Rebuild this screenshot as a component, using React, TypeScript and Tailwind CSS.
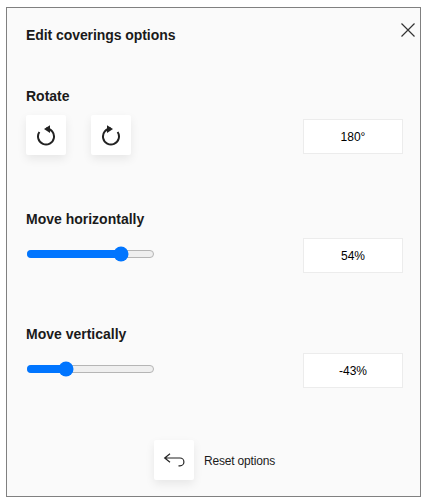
const font = "[font-family:'Liberation_Sans',Arial,sans-serif]";

function Slider({ value }: { value: number }) {
  return (
    <div className="relative ml-px mt-[7px] h-2 w-[127px] rounded-full border border-[#b5b5b5] bg-[#efefef]">
      <div className="absolute -left-px -top-px h-2 rounded-full bg-[#0075ff]" style={{ width: value }} />
      <div
        className="absolute top-1/2 h-[15px] w-[15px] -translate-x-1/2 -translate-y-1/2 rounded-full bg-[#0075ff]"
        style={{ left: value - 1 }}
      />
    </div>
  );
}

function ValueBox({ text }: { text: string }) {
  return (
    <div className="flex h-[35px] w-[100px] items-center justify-center border border-[#ececec] bg-white text-xs text-black">
      {text}
    </div>
  );
}

function IconButton({ children }: { children: React.ReactNode }) {
  return (
    <button className="flex h-10 w-10 items-center justify-center rounded-[2px] bg-white shadow-[0_4px_10px_rgba(0,0,0,0.08)]">
      {children}
    </button>
  );
}

function RotateIcon({ flip }: { flip?: boolean }) {
  return (
    <svg width="20" height="22" viewBox="0 0 20 22" fill="none" className={flip ? "-scale-x-100" : ""}>
      <path d="M3.4 8 A8 8 0 1 0 10 4.5" stroke="#222" strokeWidth="2" />
      <path d="M8 5 L14 1.2 L14 9 Z" fill="#222" />
    </svg>
  );
}

export default function App() {
  return (
    <div className={`h-[500px] w-[424px] bg-white pl-[6px] pt-[7px] ${font}`}>
      <div className="relative h-[490px] w-[415px] border border-[#808080] bg-[#fafafa] pl-[19px] pr-[17px] pt-[19px] text-[#1a1a1a]">
        <button className="absolute right-[4px] top-[14px]">
          <svg width="16" height="16" viewBox="0 0 16 16" fill="none">
            <path d="M1.5 1.5 L14.5 14.5 M14.5 1.5 L1.5 14.5" stroke="#333" strokeWidth="1.2" />
          </svg>
        </button>
        <h1 className="h-4 text-sm font-bold leading-4 tracking-[-0.07px]">Edit coverings options</h1>

        <h2 className="mt-[45px] h-4 text-sm font-bold leading-4">Rotate</h2>
        <div className="flex items-start justify-between">
          <div className="mt-[11px] flex gap-[25px]">
            <IconButton><RotateIcon /></IconButton>
            <IconButton><RotateIcon flip /></IconButton>
          </div>
          <div className="mt-[15px]"><ValueBox text="180°" /></div>
        </div>

        <h2 className="mt-[56px] h-4 text-sm font-bold leading-4">Move horizontally</h2>
        <div className="flex items-start justify-between">
          <div className="mt-[16px]"><Slider value={94} /></div>
          <div className="mt-[11px]"><ValueBox text="54%" /></div>
        </div>

        <h2 className="mt-[53px] h-4 text-sm font-bold leading-4">Move vertically</h2>
        <div className="flex items-start justify-between">
          <div className="mt-[16px]"><Slider value={39} /></div>
          <div className="mt-[11px]"><ValueBox text="-43%" /></div>
        </div>

        <div className="mt-[52px] flex items-center justify-start gap-[10px] pl-[128px]">
          <IconButton>
            <svg width="22" height="14" viewBox="0 0 22 14" fill="none">
              <path d="M7 0.8 L1.7 5 L7 9.2 M1.7 5 H17 A3.9 3.9 0 0 1 17 12.8 H15.5" stroke="#222" strokeWidth="1.2" />
            </svg>
          </IconButton>
          <span className="mt-[2px] text-xs tracking-[-0.18px] text-[#1a1a1a]">Reset options</span>
        </div>
      </div>
    </div>
  );
}
